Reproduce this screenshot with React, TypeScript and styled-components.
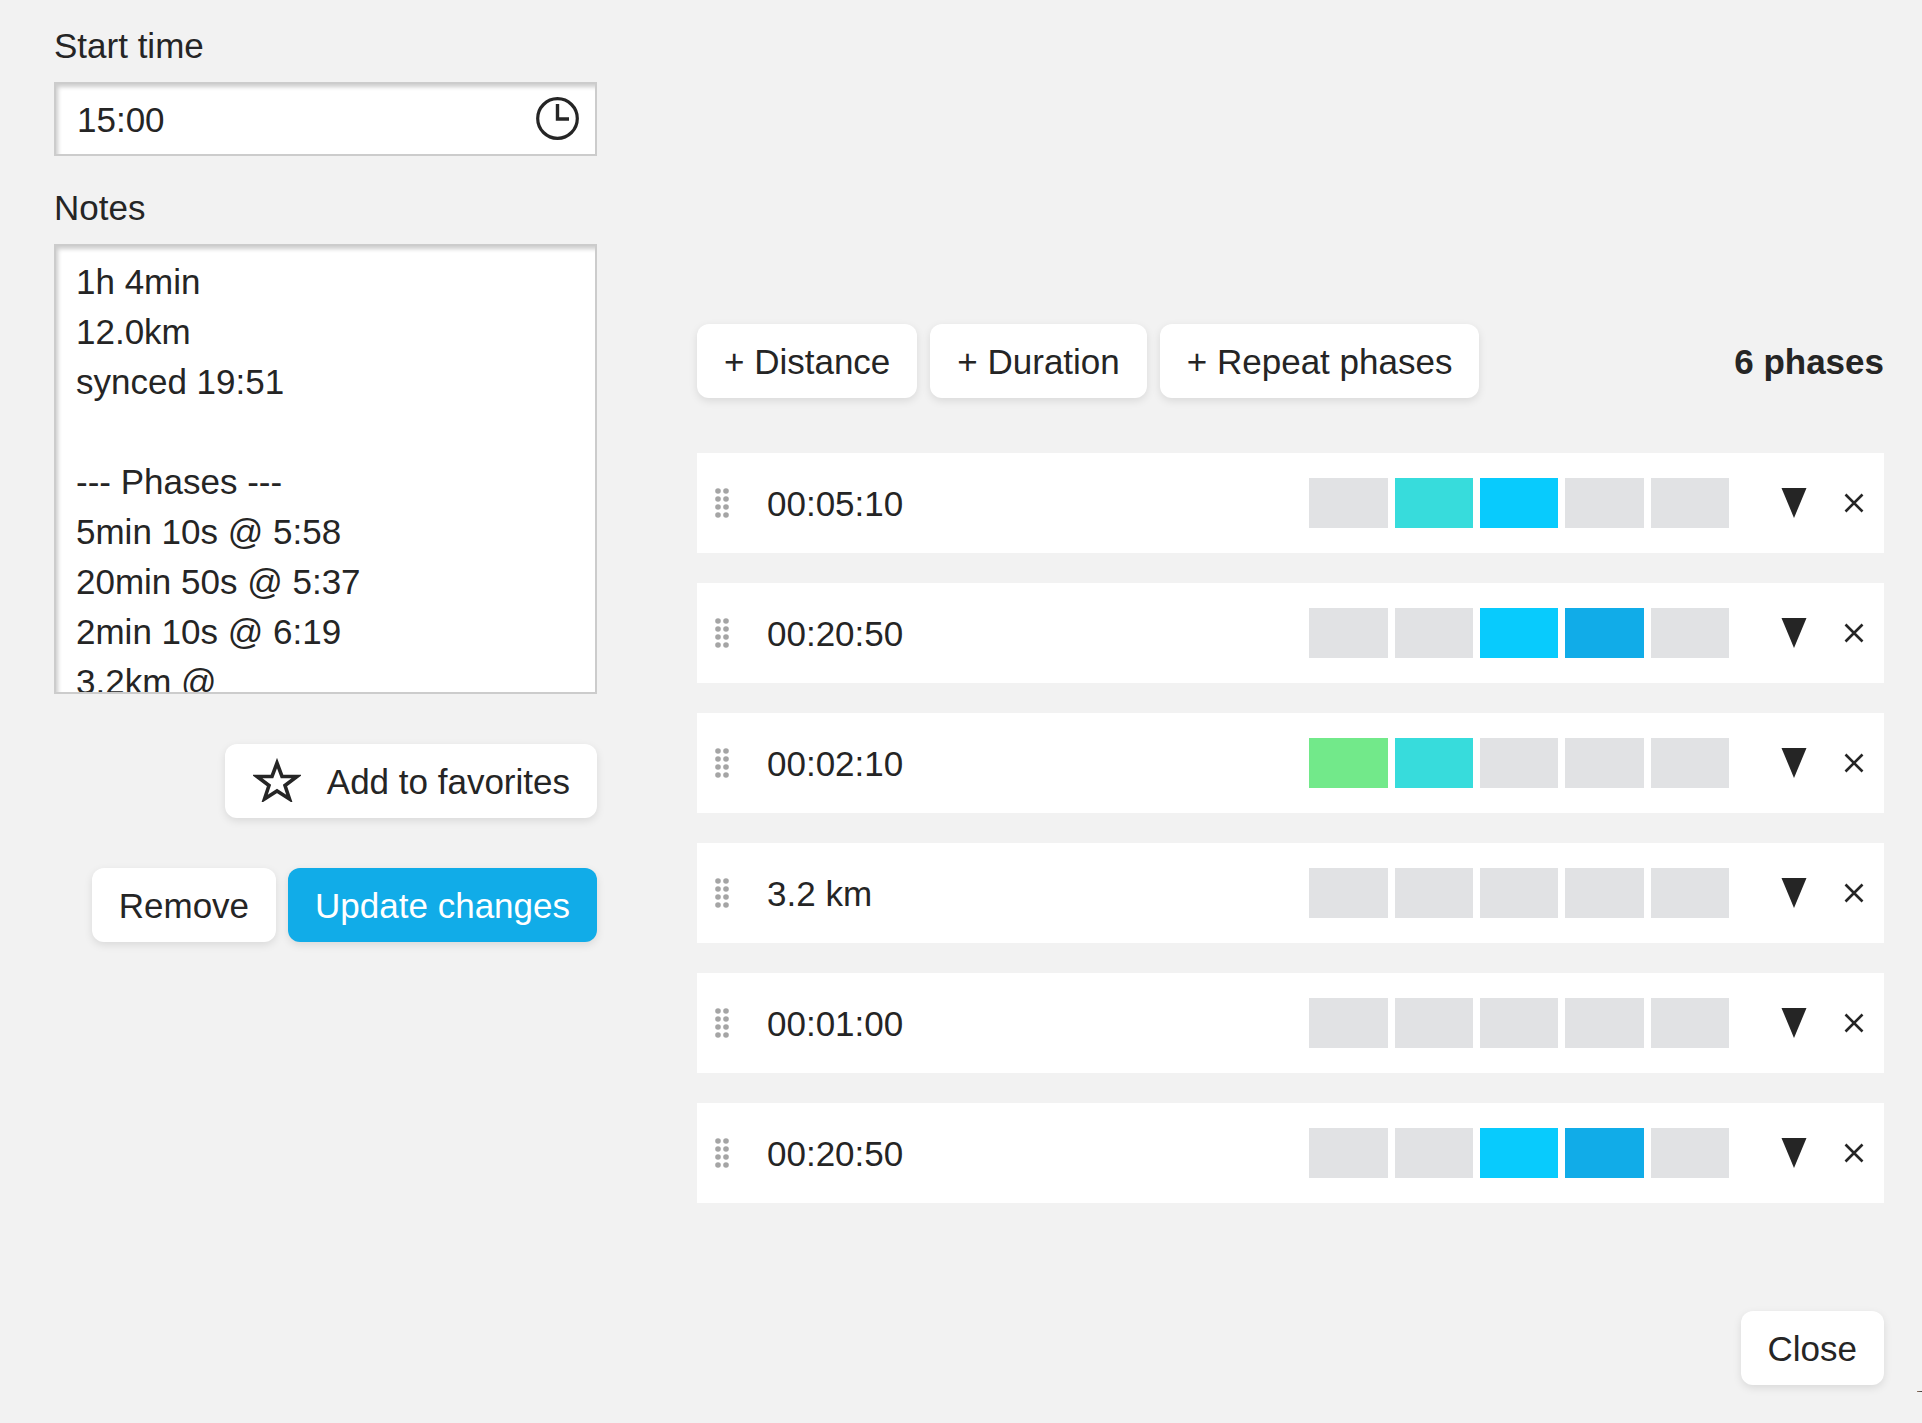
import React from "react";
import styled, { createGlobalStyle } from "styled-components";

const Global = createGlobalStyle`
  html, body { margin: 0; padding: 0; background: #f2f2f2; }
  body { font-family: "Liberation Sans", Arial, sans-serif; font-size: 35px; color: #252525; }
  * { box-sizing: border-box; }
`;

const Page = styled.div`
  position: relative;
  width: 1922px;
  height: 1423px;
  display: grid;
  grid-template-columns: 543px 1187px;
  column-gap: 100px;
  padding: 20px 0 0 54px;
  overflow: hidden;
`;

const LeftColumn = styled.div`
  display: flex;
  flex-direction: column;
`;

const RightColumn = styled.div`
  display: flex;
  flex-direction: column;
  padding-top: 304px;
`;

const Label = styled.label`
  display: block;
  height: 50px;
  line-height: 52px;
  margin-bottom: 12px;
`;

const TimeField = styled.div`
  position: relative;
  height: 74px;
  margin-bottom: 26px;
`;

const fieldStyles = `
  display: block;
  width: 100%;
  border: 2px solid #cccccc;
  background: #ffffff;
  box-shadow: inset 3px 4px 4px -1px rgba(0, 0, 0, 0.2);
  font: inherit;
  color: inherit;
  outline: none;
  border-radius: 0;
`;

const TimeInput = styled.input`
  ${fieldStyles}
  height: 100%;
  padding: 2px 20px 0 21px;
`;

const ClockIcon = styled.svg`
  position: absolute;
  left: 481.5px;
  top: 15px;
  width: 44px;
  height: 44px;
`;

const NotesArea = styled.textarea`
  ${fieldStyles}
  height: 450px;
  padding: 11px 20px 0 20px;
  line-height: 50px;
  resize: none;
  overflow: hidden;
  margin-bottom: 50px;
`;

const ButtonRow = styled.div<{ $gap?: number; $bottom?: number }>`
  display: flex;
  justify-content: flex-end;
  gap: ${(p) => p.$gap ?? 0}px;
  margin-bottom: ${(p) => p.$bottom ?? 0}px;
`;

const Button = styled.button<{ $primary?: boolean }>`
  height: 74px;
  padding: 2px 27px 0;
  border: none;
  border-radius: 12px;
  background: ${(p) => (p.$primary ? "#11ace8" : "#ffffff")};
  color: ${(p) => (p.$primary ? "#ffffff" : "#252525")};
  box-shadow: 0 3px 8px rgba(0, 0, 0, 0.1);
  font: inherit;
  white-space: nowrap;
  display: inline-flex;
  align-items: center;
`;

const StarIcon = styled.svg`
  width: 48px;
  height: 44px;
  margin: -4px 26px 0 1px;
  flex: none;
`;

const Toolbar = styled.div`
  display: flex;
  align-items: center;
  gap: 13px;
  margin-bottom: 55px;
`;

const PhaseCount = styled.div`
  margin-left: auto;
  padding-top: 2px;
  font-weight: 700;
`;

const PhaseList = styled.div`
  display: flex;
  flex-direction: column;
  gap: 30px;
`;

const PhaseRow = styled.div`
  height: 100px;
  background: #ffffff;
  display: flex;
  align-items: center;
  padding: 0 20px 0 18px;
`;

const DragHandle = styled.svg`
  width: 14px;
  height: 30px;
  flex: none;
  margin-right: 38px;
`;

const PhaseValue = styled.div`
  flex: 1;
  padding-top: 2px;
`;

const Zones = styled.div`
  display: grid;
  grid-template-columns: repeat(5, 78.2px);
  column-gap: 7.2px;
  margin-right: 52px;
`;

const Zone = styled.div<{ $color: string }>`
  height: 50px;
  background: ${(p) => p.$color};
`;

const ArrowIcon = styled.svg`
  width: 26px;
  height: 30px;
  flex: none;
  margin-right: 37px;
`;

const CloseIcon = styled.svg`
  width: 20px;
  height: 20px;
  flex: none;
`;

const Footer = styled.div`
  display: flex;
  justify-content: flex-end;
  margin-top: 108px;
`;

const CornerMark = styled.div`
  position: absolute;
  right: 0;
  top: 1391px;
  width: 5px;
  height: 1px;
  background: linear-gradient(to right, #9a7a66, #3a3a3a);
`;

const GRAY = "#e1e2e4";
const TEAL = "#37dcdc";
const CYAN = "#08cbfd";
const BLUE = "#11ace8";
const GREEN = "#72e98a";

const phases = [
  { value: "00:05:10", zones: [GRAY, TEAL, CYAN, GRAY, GRAY] },
  { value: "00:20:50", zones: [GRAY, GRAY, CYAN, BLUE, GRAY] },
  { value: "00:02:10", zones: [GREEN, TEAL, GRAY, GRAY, GRAY] },
  { value: "3.2 km", zones: [GRAY, GRAY, GRAY, GRAY, GRAY] },
  { value: "00:01:00", zones: [GRAY, GRAY, GRAY, GRAY, GRAY] },
  { value: "00:20:50", zones: [GRAY, GRAY, CYAN, BLUE, GRAY] },
];

const notes = `1h 4min
12.0km
synced 19:51

--- Phases ---
5min 10s @ 5:58
20min 50s @ 5:37
2min 10s @ 6:19
3.2km @`;

const Grip = () => (
  <DragHandle viewBox="0 0 14 30">
    {[3, 11].map((x) =>
      [3, 11, 19, 27].map((y) => <circle key={`${x}-${y}`} cx={x} cy={y} r={2.8} fill="#a5a5a5" />)
    )}
  </DragHandle>
);

export default function App() {
  return (
    <>
      <Global />
      <Page>
        <LeftColumn>
          <Label>Start time</Label>
          <TimeField>
            <TimeInput readOnly value="15:00" />
            <ClockIcon viewBox="0 0 44 44" fill="none" stroke="#252525" strokeWidth={3.2}>
              <circle cx="21.5" cy="21.5" r="19.8" />
              <path d="M21.5 7v15h11.5" strokeWidth={3.4} />
            </ClockIcon>
          </TimeField>
          <Label>Notes</Label>
          <NotesArea readOnly value={notes} />
          <ButtonRow $bottom={50}>
            <Button>
              <StarIcon viewBox="0 0 48 44" fill="none" stroke="#252525" strokeWidth={3.6} strokeMiterlimit={10}>
                <path d="M24 5l5 13.5h15l-12 9L36.5 41 24 33l-12.5 8L16 27.5l-12-9h15z" />
              </StarIcon>
              Add to favorites
            </Button>
          </ButtonRow>
          <ButtonRow $gap={12}>
            <Button>Remove</Button>
            <Button $primary>Update changes</Button>
          </ButtonRow>
        </LeftColumn>
        <RightColumn>
          <Toolbar>
            <Button>+ Distance</Button>
            <Button>+ Duration</Button>
            <Button>+ Repeat phases</Button>
            <PhaseCount>6 phases</PhaseCount>
          </Toolbar>
          <PhaseList>
            {phases.map((phase, i) => (
              <PhaseRow key={i}>
                <Grip />
                <PhaseValue>{phase.value}</PhaseValue>
                <Zones>
                  {phase.zones.map((c, j) => (
                    <Zone key={j} $color={c} />
                  ))}
                </Zones>
                <ArrowIcon viewBox="0 0 26 30">
                  <path d="M0.5 0h25L13 30z" fill="#252525" />
                </ArrowIcon>
                <CloseIcon viewBox="0 0 20 20" fill="none" stroke="#252525" strokeWidth={2.6}>
                  <path d="M1.5 1.5l17 17M18.5 1.5l-17 17" />
                </CloseIcon>
              </PhaseRow>
            ))}
          </PhaseList>
          <Footer>
            <Button>Close</Button>
          </Footer>
        </RightColumn>
        <CornerMark />
      </Page>
    </>
  );
}
